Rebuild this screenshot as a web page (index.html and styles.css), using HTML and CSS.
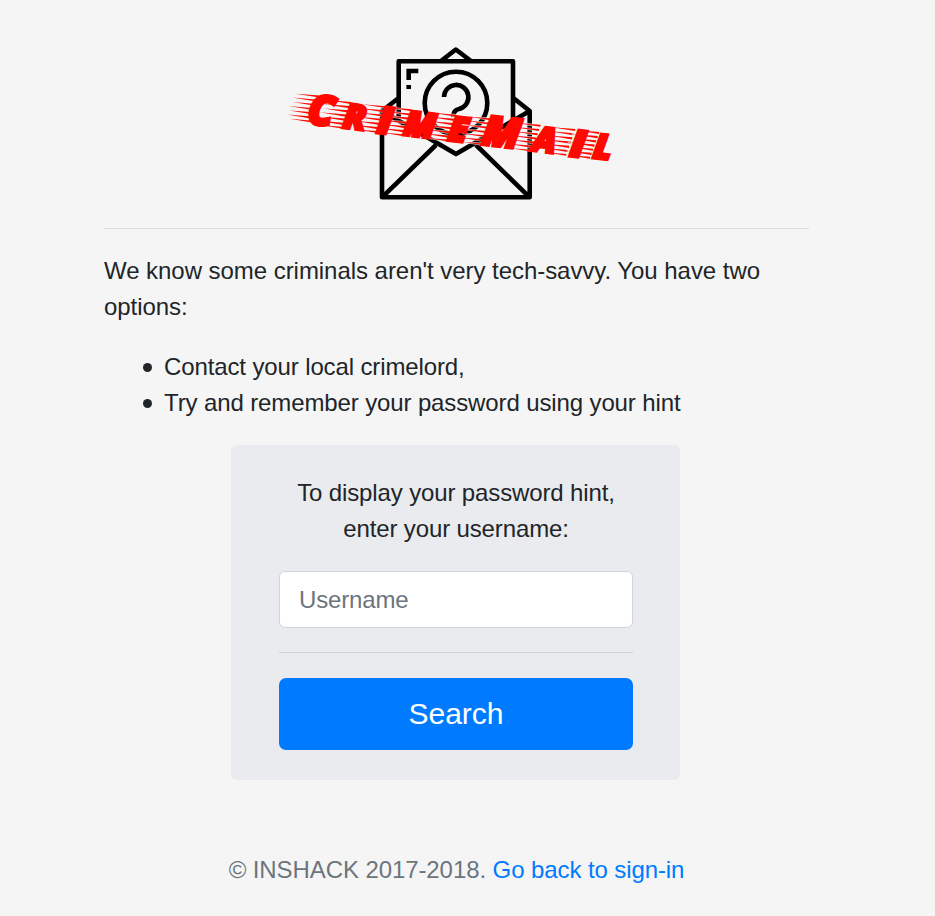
FILE: index.html
```html
<!DOCTYPE html>
<html lang="en">
<head>
<meta charset="utf-8">
<title>CrimeMail - Password hint</title>
<link rel="stylesheet" href="styles.css">
</head>
<body>
<main class="page">
  <header class="brand">
    <svg class="logo" viewBox="280 36 344 176" role="img" aria-label="CrimeMail">
      <defs>
        <path id="streaks" d="M2-26.2L26-27.2V-25.2ZM-1-21.9L25-22.9V-20.8ZM0-17.5L24-18.6V-16.4ZM-4-13.1L23-14.2V-12ZM-2-8.8L22-9.9V-7.7ZM-4-4.5L21-5.6V-3.4ZM-1-.5L20-1.4V.4Z"/>
      </defs>
      <g class="envelope">
        <path d="M398.7 118V61.3H513V118M441 61L455.8 49.5 471 61M398 98.5L382 111V197.3H529.7V111L514 98.5M382 111L456 154 529.7 111M382 197.3L436 145M529.7 197.3L476 145"/>
        <circle cx="456" cy="103" r="31.3"/>
        <path d="M444 97A12.2 12.2 0 1 1 459 109Q453.3 110 453.3 117"/>
        <path class="mark" d="M408.7 80V71H418.3M408.7 85V89"/>
      </g>
      <g class="wordmark" transform="translate(307 124.5) rotate(6.9)">
        <g class="streaks">
          <use href="#streaks" x="-17" y="-3"/>
          <use href="#streaks" x="15" y="-.5"/>
          <use href="#streaks" x="50" y="-.5"/>
          <use href="#streaks" x="76" y="-.5"/>
          <use href="#streaks" x="121" y="-.5"/>
          <use href="#streaks" x="157" y="-1"/>
          <use href="#streaks" x="206" y="-.5"/>
          <use href="#streaks" x="241" y="-.5"/>
          <use href="#streaks" x="265" y="-.5"/>
        </g>
        <text y="-1" transform="skewX(-1)"><tspan class="cap" x="-1">C</tspan><tspan x="35">R</tspan><tspan class="narrow" x="71">I</tspan><tspan x="96">M</tspan><tspan x="141">E</tspan><tspan class="cap" x="175">M</tspan><tspan x="226">A</tspan><tspan class="narrow" x="265">I</tspan><tspan x="287">L</tspan></text>
      </g>
    </svg>
  </header>
  <hr class="rule">
  <p class="intro">We know some criminals aren't very tech-savvy. You have two options:</p>
  <ul class="options">
    <li>Contact your local crimelord,</li>
    <li>Try and remember your password using your hint</li>
  </ul>
  <form class="card">
    <label class="prompt" for="username">To display your password hint, enter your username:</label>
    <input class="field" id="username" type="text" placeholder="Username">
    <hr class="rule">
    <button class="button" type="button">Search</button>
  </form>
  <footer class="footer">© INSHACK 2017-2018. <a href="#">Go back to sign-in</a></footer>
</main>
</body>
</html>
```
FILE: styles.css
```css
* { box-sizing: border-box; }
body {
  margin: 0;
  background: #f5f5f5;
  color: #212529;
  font: 24px/36px "Liberation Sans", Arial, sans-serif;
}
.page { width: 705px; margin: 0 0 0 104px; padding-top: 36px; }
.brand { display: flex; justify-content: center; }
.logo { width: 344px; height: 176px; display: block; margin-right: 9px; }
.envelope { fill: none; stroke: #000; stroke-width: 4.6; stroke-linejoin: round; }
.envelope .mark { stroke-linejoin: miter; }
.wordmark { fill: #ff0800; }
.wordmark text {
  font: italic 800 35px "Open Sans", sans-serif;
  stroke: #ff0800;
  stroke-width: 2.8;
}
.wordmark .cap { font-size: 42px; }
.wordmark .narrow { stroke-width: 5; }
.streaks { stroke: #f5f5f5; stroke-width: 1.4; stroke-opacity: .7; paint-order: stroke; }
.rule { margin: 0; border: 0; height: 1px; background: #dcdcdc; }
.brand + .rule { margin-top: 16px; }
.intro { margin: 24px 0; letter-spacing: -.045px; }
.options { margin: 0 0 24px; padding-left: 60px; list-style: none; letter-spacing: -.12px; }
.options li { display: flex; align-items: center; }
.options li::before {
  content: "";
  width: 9px;
  height: 9px;
  margin: 1px 12px 0 -21px;
  border-radius: 50%;
  background: #212529;
}
.card {
  width: 449px;
  height: 335px;
  margin: 0 auto 72px 127px;
  padding: 30px 47px 30px 48px;
  border-radius: 6px;
  background: #e9ebee;
}
.prompt { display: block; text-align: center; margin-bottom: 24px; letter-spacing: -.13px; }
.field {
  display: block;
  width: 100%;
  height: 57px;
  padding: 0 19px;
  border: 1.5px solid #ced4da;
  border-radius: 6px;
  background: #fff;
  font: inherit;
  letter-spacing: -.15px;
}
.field::placeholder { color: #6c757d; opacity: 1; }
.card .rule { margin: 24px 0 25px; background: #d1d3d6; }
.button {
  display: block;
  width: 100%;
  height: 72px;
  padding: 0 0 2px;
  border: 0;
  border-radius: 7px;
  background: #007bff;
  color: #fff;
  font: 30px/45px "Liberation Sans", Arial, sans-serif;
}
.footer { text-align: center; color: #6c757d; letter-spacing: -.09px; }
.footer a { color: #007bff; text-decoration: none; }
```
